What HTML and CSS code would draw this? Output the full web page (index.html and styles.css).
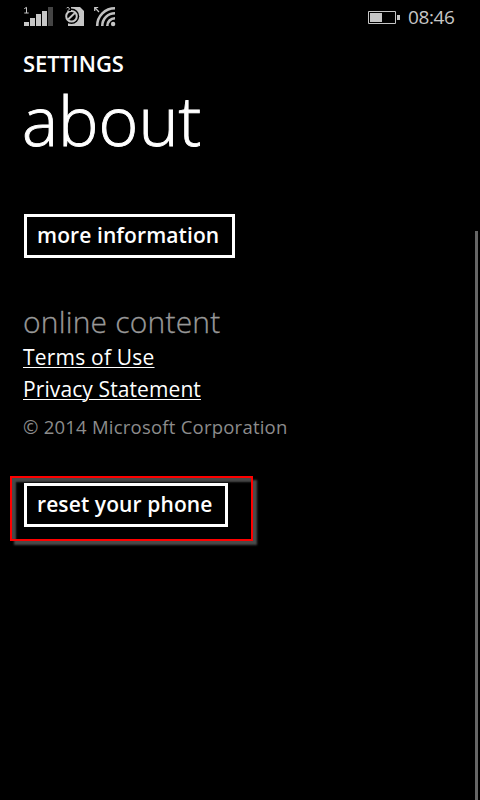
FILE: index.html
```html
<!DOCTYPE html>
<html lang="en">
<head>
<meta charset="utf-8">
<title>about</title>
<link rel="stylesheet" href="styles.css">
</head>
<body>
<header class="status">
  <svg class="indicators" width="94" height="22" viewBox="24 6 94 22">
    <path class="fill" d="M24 22h5v4h-5zM30 18h5v8h-5zM36 14h5v12h-5zM42 11h5v15h-5z"/>
    <path class="dim" d="M48 7h5v19h-5z"/>
    <path class="thin" d="M24.300 8.600L26.500 7.400V13M24.300 13h4.400"/>
    <path class="fill" d="M70 7h10l4 4v15H68V9z"/>
    <circle class="hole" cx="71.500" cy="16.300" r="7.700"/>
    <circle class="ring" cx="71.500" cy="16.300" r="5.300"/>
    <path class="ring" d="M68.300 19.300l6.400-6.200"/>
    <path class="cut" d="M66 6h5v5h-5z"/>
    <path class="thin" d="M66.500 8.300c.5-1.500 3-1 2.800.6-.2 1.300-1.500 1.800-2.300 2.600"/>
    <circle class="fill" cx="113.100" cy="24" r="2.200"/>
    <path class="wave" d="M107.300 26c0-4.500 3.300-7.700 7.700-7.700M102.300 26c0-7.200 5.500-12.700 12.700-12.700M97.200 26C97.200 16 105 8.300 115 8.300"/>
    <path class="arrow" d="M94.700 11V7.500h3.500M94.700 7.500l4.300 4.500"/>
  </svg>
  <div class="power">
    <svg width="32" height="14" viewBox="0 0 32 14">
      <path class="thin" d="M.5.5h27v12H.5z"/>
      <path class="fill" d="M2 2h12v9H2zM29 4h3v5h-3z"/>
    </svg>
    <span class="clock">08:46</span>
  </div>
</header>
<main class="page">
  <div class="app">SETTINGS</div>
  <h1 class="title">about</h1>
  <button class="btn more">more information</button>
  <h2 class="section">online content</h2>
  <a class="link terms">Terms of Use</a>
  <a class="link privacy">Privacy Statement</a>
  <p class="copyright">© 2014 Microsoft Corporation</p>
  <div class="reset-row">
    <div class="highlight"></div>
    <button class="btn reset">reset your phone</button>
  </div>
</main>
<div class="scrollbar"></div>
</body>
</html>
```
FILE: styles.css
```css
* { box-sizing: border-box; }
html { background: #000; }
body { margin: 0; width: 480px; height: 800px; overflow: hidden; position: relative; background: #000; color: #fff; font-family: "Open Sans", "Noto Sans", sans-serif; }
.status { height: 34px; padding: 6px 25px 0 24px; display: flex; justify-content: space-between; align-items: flex-start; }
.indicators { display: block; }
.fill { fill: #c6c6c6; }
.dim { fill: #444; }
.hole, .cut { fill: #000; }
.thin { fill: none; stroke: #c6c6c6; stroke-width: 1; }
.ring { fill: none; stroke: #c6c6c6; stroke-width: 2; }
.wave { fill: none; stroke: #c0c0c0; stroke-width: 2.6; }
.arrow { fill: none; stroke: #c6c6c6; stroke-width: 1.2; }
.power { display: flex; gap: 8px; color: #c6c6c6; }
.power svg { margin-top: 5px; }
.clock { width: 47px; font-size: 19px; line-height: 22px; letter-spacing: -.4px; white-space: nowrap; }
.page { padding: 15px 0 0 23px; display: flex; flex-direction: column; align-items: flex-start; white-space: nowrap; }
.app { font-size: 22px; font-weight: 600; line-height: 28px; letter-spacing: -.05px; }
.title { margin: 0 0 0 -1px; height: 137px; font-size: 68px; font-weight: 300; line-height: 86px; -webkit-text-stroke: .9px #fff; }
.btn { height: 44px; border: 3px solid #fff; border-radius: 0; background: #000; color: #fff; margin: 0 0 0 1px; padding: 0 0 2px 10px; font-family: inherit; font-size: 21px; font-weight: 600; line-height: 36px; text-align: left; white-space: nowrap; }
.more { width: 211px; letter-spacing: .1px; }
.section { margin: 44px 0 0; font-size: 30px; font-weight: 300; line-height: 40px; letter-spacing: .2px; color: #999; -webkit-text-stroke: .3px #999; }
.link { position: relative; top: -1px; font-size: 21px; line-height: 32px; text-decoration: underline; text-decoration-thickness: 1px; text-underline-offset: 2px; }
.terms { letter-spacing: .2px; }
.privacy { letter-spacing: .1px; }
.copyright { margin: 6px 0 0; font-size: 18.500px; line-height: 30px; letter-spacing: .23px; color: #8c8c8c; }
.reset-row { position: relative; margin-top: 41px; }
.reset { position: relative; display: block; width: 204px; letter-spacing: .1px; }
.highlight { position: absolute; left: -13px; top: -7px; width: 243px; height: 65px; border: 2px solid #f00; box-shadow: 4px 4px 2px #4a4a4a, inset 4px 4px 2px #484848; }
.scrollbar { position: absolute; left: 475px; top: 231px; width: 3px; height: 569px; background: #666; }
```
